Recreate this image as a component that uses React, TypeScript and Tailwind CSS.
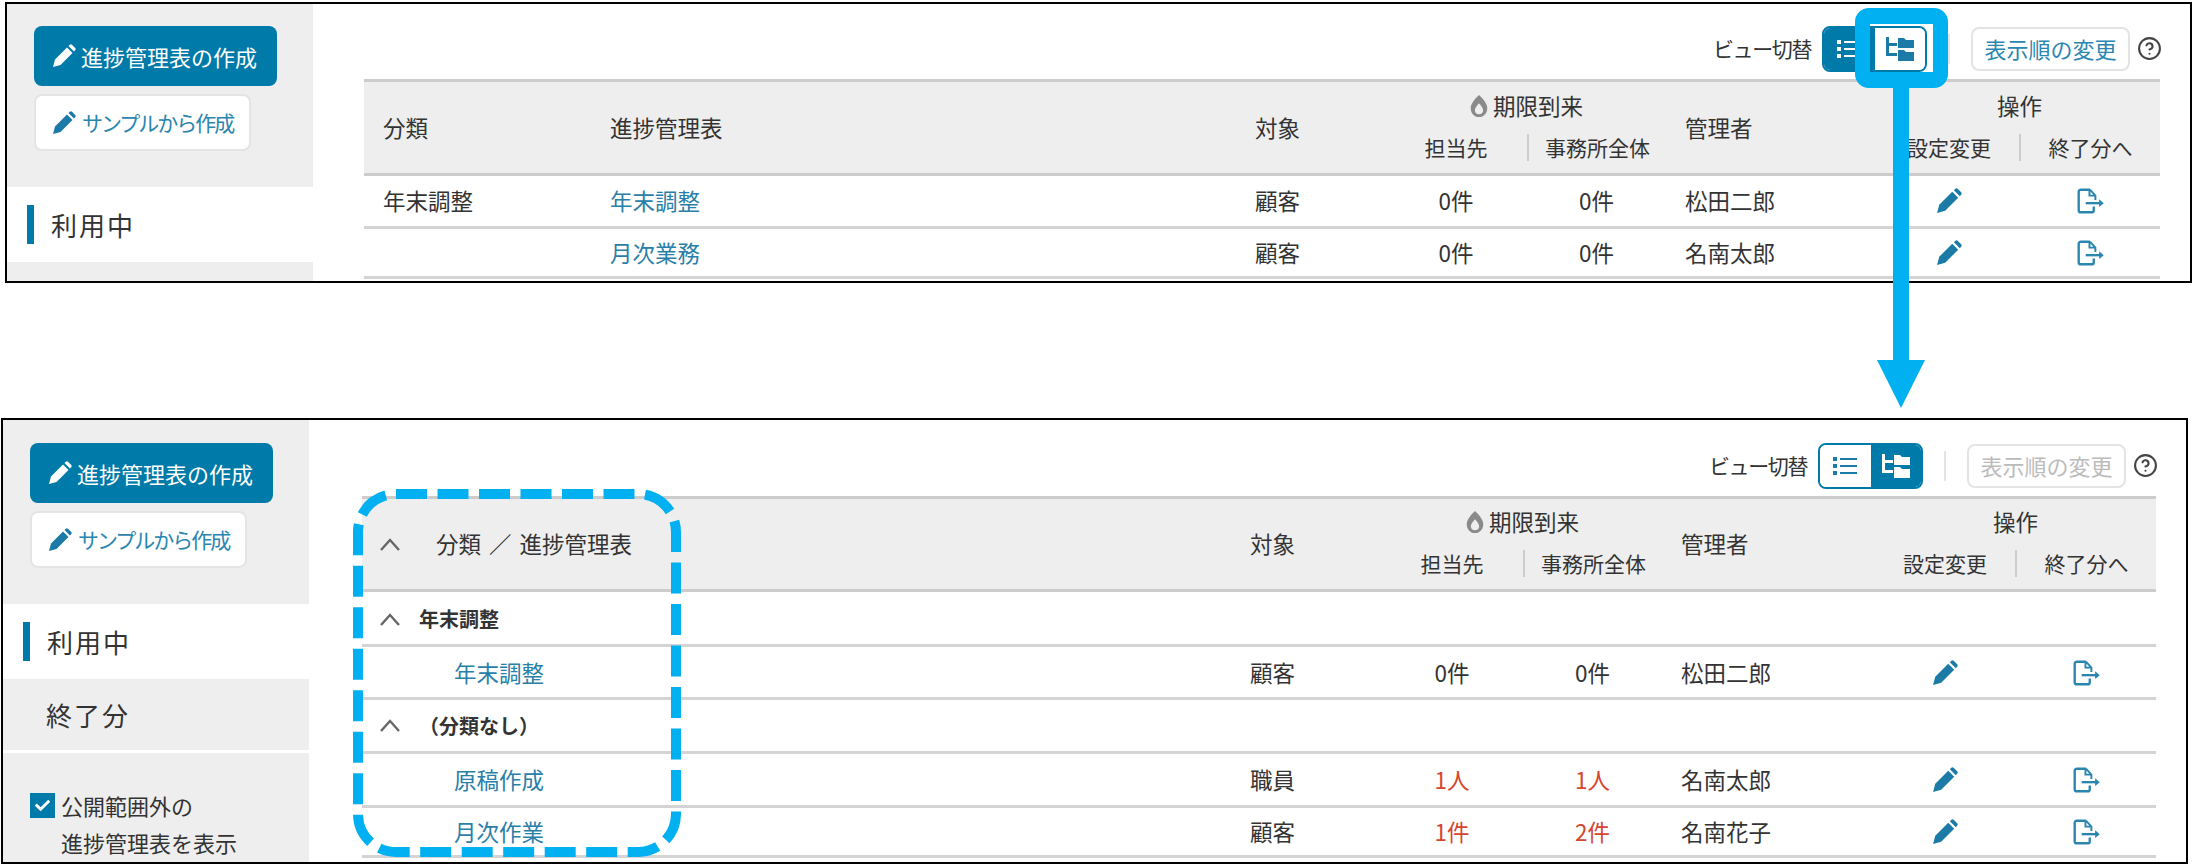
import { CircleHelp } from "lucide-react";
import { FaBurn, FaCheck } from "react-icons/fa";

const flatCols = "grid-cols-[227px_645px_149px_142px_139px_213px_140px_141px]";
const treeCols = "grid-cols-[869px_150px_142px_139px_213px_140px_141px]";

function PencilIcon({ color, size = 24 }: { color: string; size?: number }) {
  return (
    <svg width={size} height={size} viewBox="0 0 24 24" fill={color}>
      <path d="M1 23l2-7.5L15 3.5l5.5 5.5L8.5 21z" />
      <path d="M16.5 2l1.3-1.2a1.6 1.6 0 0 1 2.2 0l3.2 3.2a1.6 1.6 0 0 1 0 2.2L22 7.5z" />
    </svg>
  );
}

function ExportIcon() {
  return (
    <svg width="28" height="26" viewBox="0 0 26 24" fill="none" stroke="#2a86b0" strokeWidth="2.2">
      <path d="M13 1.5H4.5a2 2 0 0 0-2 2v17a2 2 0 0 0 2 2h10a2 2 0 0 0 2-2v-3.5" />
      <path d="M12.5 2v5h5.5M13 1.5l5 5.5v4" strokeWidth="1.8" />
      <path d="M9 14h14" />
      <path d="M22 11.5l3 2.5-3 2.5z" fill="#2a86b0" strokeWidth="1" />
    </svg>
  );
}

function ListIcon({ color }: { color: string }) {
  return (
    <svg width="24" height="20" viewBox="0 0 24 20" fill={color}>
      <rect x="0" y="1" width="4" height="4" />
      <rect x="0" y="8" width="4" height="4" />
      <rect x="0" y="15" width="4" height="4" />
      <rect x="7" y="2" width="17" height="2" />
      <rect x="7" y="9" width="17" height="2" />
      <rect x="7" y="16" width="17" height="2" />
    </svg>
  );
}

function TreeIcon({ color }: { color: string }) {
  return (
    <svg width="28" height="26" viewBox="0 0 28 26" fill={color}>
      <path d="M0 1h3v6h8v3H3v7h8v3H0z" />
      <path d="M12 2h6l2 2h8v8H12z" />
      <path d="M12 14h6l2 2h8v9H12z" />
    </svg>
  );
}

function Chevron() {
  return (
    <svg width="20" height="13" viewBox="0 0 20 13" fill="none" stroke="#666666" strokeWidth="2.4">
      <path d="M1 12l9-10 9 10" />
    </svg>
  );
}

function Sidebar({ children, top }: { children: React.ReactNode; top: string }) {
  return (
    <div className="flex w-[306px] shrink-0 flex-col self-stretch">
      <div className={`flex shrink-0 flex-col items-start bg-[#eeeeee] pl-[27px] ${top}`}>
        <button className="flex h-[60px] w-[243px] items-center gap-[5px] rounded-[8px] bg-[#007aa8] pl-[18px] text-[22px] text-white">
          <PencilIcon color="#ffffff" />
          <span className="whitespace-nowrap">進捗管理表の作成</span>
        </button>
        <button className="mt-[8px] flex h-[57px] w-[217px] items-center gap-[6px] rounded-[8px] border-2 border-[#e4e4e4] bg-white pl-[16px] text-[21px] tracking-[-2px] text-[#2a86b0]">
          <PencilIcon color="#1b7aa6" />
          <span className="whitespace-nowrap">サンプルから作成</span>
        </button>
      </div>
      <div className="flex h-[75px] shrink-0 items-center bg-white pl-[20px]">
        <div className="h-[39px] w-[7px] bg-[#007aa8]" />
        <span className="ml-[17px] text-[26px] tracking-[2px] text-[#333333]">利用中</span>
      </div>
      {children}
    </div>
  );
}

function Toolbar({ disabled, tree }: { disabled: boolean; tree: boolean }) {
  return (
    <div className="-mr-[2px] flex h-[47px] shrink-0 items-center justify-end text-[#333333]">
      <span className="mr-[11px] whitespace-nowrap text-[21px] tracking-[-1.4px]">ビュー切替</span>
      <div className="flex h-[46px] w-[105px] overflow-hidden rounded-[8px] border-2 border-[#007aa8]">
        <div className={`flex w-1/2 items-center justify-center ${tree ? "bg-white" : "bg-[#007aa8]"}`}>
          <ListIcon color={tree ? "#1b7aa6" : "#ffffff"} />
        </div>
        <div className={`flex w-1/2 items-center justify-center ${tree ? "bg-[#007aa8]" : "bg-white"}`}>
          <TreeIcon color={tree ? "#ffffff" : "#1b7aa6"} />
        </div>
      </div>
      <div className="mx-[21px] h-[30px] w-[2px] bg-[#e4e4e4]" />
      <button
        className={`h-[44px] w-[159px] whitespace-nowrap rounded-[8px] border-2 border-[#e4e4e4] bg-white text-[22px] ${
          disabled ? "text-[#bbbbbb]" : "text-[#2a86b0]"
        }`}
      >
        表示順の変更
      </button>
      <CircleHelp className="ml-[7px]" size={25} color="#444444" strokeWidth={2} />
    </div>
  );
}

function HeaderRight() {
  return (
    <>
      <div className="row-span-2 flex items-center pl-[19px] pt-[7px]">対象</div>
      <div className="col-span-2 flex items-center justify-center gap-[3px]">
        <FaBurn size={22} color="#8a8a8a" />
        期限到来
      </div>
      <div className="row-span-2 flex items-center pl-[19px] pt-[7px]">管理者</div>
      <div className="col-span-2 flex items-center justify-center">操作</div>
    </>
  );
}

function HeaderSub() {
  return (
    <>
      <div className="mt-[5px] flex h-[27px] items-center justify-center text-[21px]">担当先</div>
      <div className="mt-[5px] flex h-[27px] items-center justify-center border-l-2 border-[#cccccc] text-[21px]">事務所全体</div>
      <div className="mt-[5px] flex h-[27px] items-center justify-center text-[21px]">設定変更</div>
      <div className="mt-[5px] flex h-[27px] items-center justify-center border-l-2 border-[#cccccc] text-[21px]">終了分へ</div>
    </>
  );
}

type Values = { target: string; a: string; b: string; manager: string; red?: boolean };

function ValueCells({ target, a, b, manager, red }: Values) {
  const numberColor = red ? "text-[#d6452e]" : "text-[#333333]";
  return (
    <>
      <div className="pl-[19px]">{target}</div>
      <div className={`text-center ${numberColor}`}>{a}</div>
      <div className={`text-center ${numberColor}`}>{b}</div>
      <div className="pl-[19px]">{manager}</div>
      <div className="flex justify-center">
        <PencilIcon color="#1b7aa6" size={26} />
      </div>
      <div className="flex justify-center">
        <ExportIcon />
      </div>
    </>
  );
}

export default function App() {
  return (
    <div className="relative h-[866px] w-[2193px] overflow-hidden bg-white font-['Noto_Sans_CJK_JP',sans-serif] text-[#333333]">
      {/* 上段: 一覧ビュー */}
      <div className="absolute left-[5px] top-[2px] flex h-[281px] w-[2187px] overflow-hidden border-2 border-black">
        <Sidebar top="h-[183px] pt-[22px]">
          <div className="flex-1 bg-[#eeeeee]" />
        </Sidebar>
        <div className="ml-[51px] flex w-[1796px] flex-col pt-[21px]">
          <Toolbar disabled={false} tree={false} />
          <div className={`mt-[7px] grid shrink-0 ${flatCols} grid-rows-[47px_37px] border-y-[3px] border-[#cccccc] bg-[#eeeeee] pb-[7px] text-[22.5px]`}>
            <div className="row-span-2 flex items-center pl-[19px] pt-[7px]">分類</div>
            <div className="row-span-2 flex items-center pl-[19px] pt-[7px]">進捗管理表</div>
            <HeaderRight />
            <HeaderSub />
          </div>
          <div className={`grid h-[53px] shrink-0 ${flatCols} items-center border-b-[3px] border-[#d4d4d4] text-[22.5px]`}>
            <div className="pl-[19px]">年末調整</div>
            <div className="pl-[19px] text-[#2a7fa8]">年末調整</div>
            <ValueCells target="顧客" a="0件" b="0件" manager="松田二郎" />
          </div>
          <div className={`grid h-[50px] shrink-0 ${flatCols} items-center border-b-[3px] border-[#d4d4d4] text-[22.5px]`}>
            <div />
            <div className="pl-[19px] text-[#2a7fa8]">月次業務</div>
            <ValueCells target="顧客" a="0件" b="0件" manager="名南太郎" />
          </div>
        </div>
      </div>

      {/* 下段: ツリービュー */}
      <div className="absolute left-[1px] top-[418px] flex h-[446px] w-[2187px] overflow-hidden border-2 border-black">
        <Sidebar top="h-[184px] pt-[23px]">
          <div className="flex h-[71px] shrink-0 items-center bg-[#eeeeee] pl-[43px] text-[26px] tracking-[2px]">終了分</div>
          <div className="mt-[3px] flex-1 bg-[#eeeeee] pl-[27px] pt-[34px] text-[22px] leading-[37px]">
            <div className="flex items-center gap-[6px]">
              <span className="flex h-[25px] w-[25px] items-center justify-center bg-[#007aa8]">
                <FaCheck size={15} color="#ffffff" />
              </span>
              公開範囲外の
            </div>
            <div className="pl-[31px]">進捗管理表を表示</div>
          </div>
        </Sidebar>
        <div className="ml-[53px] flex w-[1794px] flex-col pt-[22px]">
          <Toolbar disabled tree />
          <div className={`mt-[7px] grid shrink-0 ${treeCols} grid-rows-[46px_37px] border-y-[3px] border-[#cccccc] bg-[#eeeeee] pb-[7px] text-[22.5px]`}>
            <div className="row-span-2 flex items-center gap-[36px] pl-[18px] pt-[7px]">
              <Chevron />
              <span>
                分類<span className="mx-[8px]">／</span>進捗管理表
              </span>
            </div>
            <HeaderRight />
            <HeaderSub />
          </div>
          <div className="flex h-[55px] shrink-0 items-center gap-[19px] border-b-[3px] border-[#d4d4d4] pl-[18px] pt-[2px] text-[20px] font-bold">
            <Chevron />
            <span>年末調整</span>
          </div>
          <div className={`grid h-[53px] shrink-0 ${treeCols} items-center border-b-[3px] border-[#d4d4d4] pt-[2px] text-[22.5px]`}>
            <div className="pl-[92px] text-[#2a7fa8]">年末調整</div>
            <ValueCells target="顧客" a="0件" b="0件" manager="松田二郎" />
          </div>
          <div className="flex h-[54px] shrink-0 items-center gap-[19px] border-b-[3px] border-[#d4d4d4] pl-[18px] text-[20px] font-bold">
            <Chevron />
            <span>（分類なし）</span>
          </div>
          <div className={`grid h-[54px] shrink-0 ${treeCols} items-center border-b-[3px] border-[#d4d4d4] text-[22.5px]`}>
            <div className="pl-[92px] text-[#2a7fa8]">原稿作成</div>
            <ValueCells target="職員" a="1人" b="1人" manager="名南太郎" red />
          </div>
          <div className={`grid h-[50px] shrink-0 ${treeCols} items-center border-b-[3px] border-[#d4d4d4] text-[22.5px]`}>
            <div className="pl-[92px] text-[#2a7fa8]">月次作業</div>
            <ValueCells target="顧客" a="1件" b="2件" manager="名南花子" red />
          </div>
        </div>
      </div>

      {/* 注釈: 切替ボタンの枠と矢印 */}
      <div className="absolute left-[1855px] top-[8px] h-[80px] w-[93px] rounded-[14px] border-x-[15px] border-y-[16px] border-[#00b0f0]" />
      <svg className="absolute left-[1877px] top-[88px]" width="48" height="320" viewBox="0 0 48 320" fill="#00b0f0">
        <rect x="16" y="0" width="16" height="272" />
        <path d="M0 272h48l-24 48z" />
      </svg>

      {/* 注釈: 点線の枠 */}
      <svg className="absolute left-[350px] top-[486px]" width="336" height="376" viewBox="0 0 336 376" fill="none">
        <rect x="8" y="8" width="318" height="358" rx="38" stroke="#00b0f0" strokeWidth="10" strokeDasharray="31 10.5" />
      </svg>
    </div>
  );
}
